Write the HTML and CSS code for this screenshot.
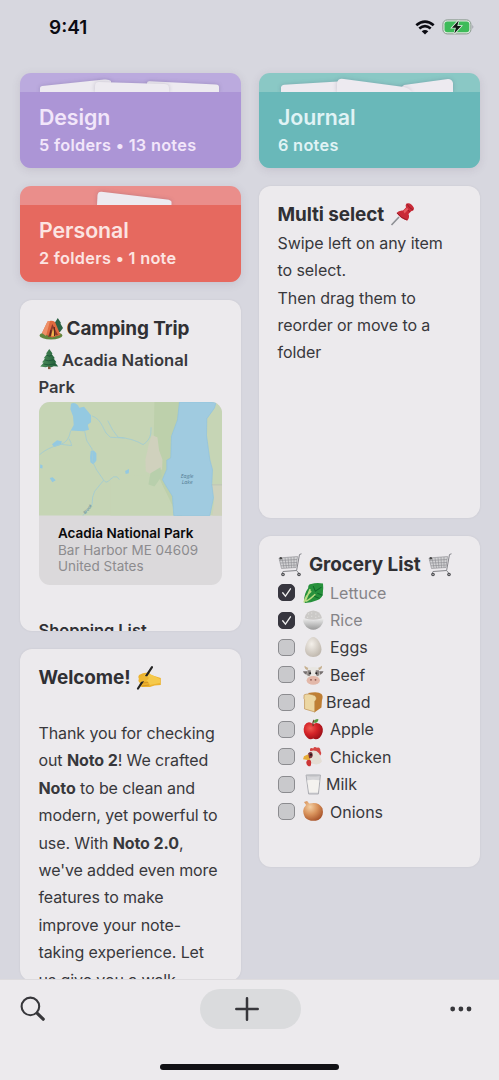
FILE: index.html
```
<!DOCTYPE html>
<html lang="en">
<head>
<meta charset="utf-8">
<title>Noto</title>
<link rel="stylesheet" href="styles.css">
</head>
<body>
<svg class="defs" width="0" height="0">
  <defs>
    <linearGradient id="silver" x1="0" y1="0" x2="0" y2="1"><stop offset="0" stop-color="#eee"/><stop offset="1" stop-color="#999"/></linearGradient>
    <radialGradient id="eggfill" cx=".4" cy=".35" r=".7"><stop offset="0" stop-color="#f4f0ea"/><stop offset="1" stop-color="#bfb7ad"/></radialGradient>
    <radialGradient id="applefill" cx=".35" cy=".35" r=".7"><stop offset="0" stop-color="#ef5a50"/><stop offset=".5" stop-color="#d42328"/><stop offset="1" stop-color="#9c1018"/></radialGradient>
    <radialGradient id="onionfill" cx=".35" cy=".3" r=".75"><stop offset="0" stop-color="#f3cfa4"/><stop offset=".5" stop-color="#d9935c"/><stop offset="1" stop-color="#a8542b"/></radialGradient>
    <linearGradient id="treefill" x1="0" x2="1"><stop offset="0" stop-color="#4f8f5c"/><stop offset="1" stop-color="#1e5a36"/></linearGradient>
    <symbol id="cart" viewBox="0 0 24 24">
      <path d="M1 5L19.500 3.500L18 14.500L3.500 15.500Z" fill="#d2d2d4"/>
      <path d="M1 5L19.500 3.500L18 14.500L3.500 15.500ZM4 5L6 15M7 5L8.500 15M10 4.500L11 15M13 4L13.500 15M16 4L16 14.500M1.500 7.500L19 6.500M2 10L19 9.500M3 12.800L18.500 12" fill="none" stroke="#8a8a8e" stroke-width=".6"/>
      <path d="M23.500.8L21.500 1.500L18.600 17.500L5 18.500L4 21M18.500 17.500L21.500 21" fill="none" stroke="#85858a" stroke-width="1"/>
      <circle cx="5" cy="21.500" r="1.800" fill="#4c4c50"/><circle cx="21" cy="21.500" r="1.800" fill="#4c4c50"/><circle cx="5" cy="21.500" r=".7" fill="#ccc"/><circle cx="21" cy="21.500" r=".7" fill="#ccc"/><circle cx="2.800" cy="5.200" r="1.200" fill="#444"/>
    </symbol>
    <symbol id="tree" viewBox="0 0 20 20">
      <path d="M8.800 16H11.300V19.800H8.800Z" fill="#80553a"/>
      <path d="M10 0L13.200 4.500L12.400 4.800L15.500 9L14.300 9.300L17 13L15.800 13.300L18.800 17L14.500 16.800L12 17.800L9.500 17L6.500 17.800L1.200 17L4.500 13.300L3 13L6 9.300L4.600 9L7.700 4.800L6.900 4.500Z" fill="url(#treefill)"/>
      <path d="M7.500 6L10 7L12.500 6M5.500 10.500L9 11.500L14.500 10.500M4.500 14.600L9 15.500L15.500 14.600" stroke="#174c31" stroke-width=".7" fill="none"/>
    </symbol>
  </defs>
</svg>
<div class="phone">
  <main class="screen">
    <header class="status">
      <span class="time">9:41</span>
      <span class="indicators">
        <svg width="20" height="15" viewBox="0 0 20 15"><g fill="none" stroke="#0b0b12" stroke-width="2.700"><path d="M1.300 5.200Q10-2 18.700 5.200"/><path d="M4.300 8.500Q10 3.800 15.700 8.500"/></g><path d="M6.700 11.300Q10 8.600 13.300 11.300L10 14.600Z" fill="#0b0b12"/></svg>
        <svg width="33" height="16" viewBox="0 0 33 16"><rect x=".9" y=".9" width="28" height="14" rx="4.300" fill="#e0eae1" stroke="#85978b" stroke-width="1"/><rect x="2.500" y="2.500" width="24.800" height="10.800" rx="2.800" fill="#3dbb59"/><path d="M30.500 5.700Q32.200 7.900 30.500 10Z" fill="#8b8d96"/><path d="M16.700 1.400L10 8.700H13.900L12.300 14.600L19.200 7H15.300Z" fill="#111713" stroke="#dfece1" stroke-width="1.600" paint-order="stroke"/></svg>
      </span>
    </header>
    <div class="board">
      <div class="column">
        <section class="folder purple">
          <svg class="papers" viewBox="0 0 221 19"><path d="M20 19V15Q20 13.500 22 13L84 6.500Q89 6 91 8V19Z"/><path d="M127 19V10Q127 7.800 130 8.200L196 11.500Q199 11.700 199 14V19Z"/><path d="M75 19V13Q75 9 79 9L144 11Q149 11 149 15V19Z"/></svg>
          <div class="label"><h2>Design</h2><p>5 folders • 13 notes</p></div>
        </section>
        <section class="folder red">
          <svg class="papers" viewBox="0 0 221 19"><path d="M77 19L77.500 9Q78 5.300 81.500 5.700L147 13.500Q151 14 151.500 16V19Z"/></svg>
          <div class="label"><h2>Personal</h2><p>2 folders • 1 note</p></div>
        </section>
        <section class="note camping">
          <h1><svg class="e24" viewBox="0 0 24 24"><ellipse cx="12" cy="18.500" rx="11.500" ry="4" fill="#62863d"/><path d="M18.800 1L22 6L21.400 6.500L24 11L21 15H16L15 7Z" fill="#2c6245"/><path d="M3 16L8.500 4.500Q13 3 16 5L21.500 18L13 20.500Z" fill="#df6a3f"/><path d="M8.500 4.500L3 16L7 19L11 4Z" fill="#ee9068"/><path d="M13.300 7L9 20L19 18Z" fill="#8f382b"/><path d="M14 11L12 19.500L16.500 18.700Z" fill="#f2b64b"/><path d="M15.300 10L15.500 19M12 13L11 19" stroke="#52251e" stroke-width="1"/></svg><span class="t-camp">Camping Trip</span></h1>
          <h3><svg class="e20 treepos"><use href="#tree"/></svg><span>Acadia National</span><br><span>Park</span></h3>
          <div class="place">
            <svg class="map" viewBox="86 22 550 341" preserveAspectRatio="none">
              <rect x="86" y="22" width="550" height="341" fill="#c6d5b5"/>
              <path d="M432 22H515V363H500L470 300L450 260L420 278L412 255L455 215L430 120Z" fill="#bdd0ab"/>
              <path d="M445 245L490 363H380L300 363V240Z" fill="#c6d5b5"/>
              <path d="M424 122L441 128L446 168L456 195L455 225L432 230L422 240L406 230L405 195L415 150Z" fill="#d0d1bd"/>
              <path d="M420 236L450 218L454 245L432 276L414 270Z" fill="#b8cfac"/>
              <path d="M604 270H636V363H606L611 320Z" fill="#cfd2bd"/>
              <path d="M507 22H617L612 40L589 72L588 122L598 195L606 225L604 270L609 310L598 363H490L486 305L466 273L456 255L469 224L469 197L481 190L483 125L501 76Z" fill="#a0cbe0" stroke="#8fc3df" stroke-width="2"/>
              <path d="M182 27Q192 21 202 31L207 39L221 36L242 62V83L232 90L236 105L219 110L181 108L190 91L188 65L180 44Z" fill="#94c9e1"/>
              <path d="M241 169L250 168L258 176V198L249 210L240 203L239 187ZM125 149L140 137L155 141L150 151L131 157ZM118 250L127 248L136 257L126 263ZM344 229L356 223L355 236L346 238ZM90 209L97 213L96 222L89 220Z" fill="#94c9e1"/>
              <path d="M88 180Q110 160 151 149Q175 143 181 108M151 149L184 153Q182 144 176 132M223 110L229 138L245 163L247 202L258 225L280 257Q288 269 299 255Q310 243 320 247L327 255M280 257L253 290L247 307L245 330L218 363M245 64Q265 70 277 96Q285 118 300 128L342 130M292 78Q306 109 323 128Q367 131 398 150Q417 138 421 118L422 98" fill="none" stroke="#a1cbd4" stroke-width="2.500"/>
              <path d="M604 271H636" stroke="#adb9b0" stroke-width="1.500"/>
              <g class="maptext"><text x="530" y="249">Eagle</text><text x="530" y="268">Lake</text><text class="brook" transform="translate(235 347) rotate(-52)">Brook</text></g>
            </svg>
            <div class="address"><b>Acadia National Park</b><span>Bar Harbor ME 04609</span><span>United States</span></div>
          </div>
          <h2 class="cut">Shopping List</h2>
        </section>
        <section class="note">
          <h1><span>Welcome!</span><svg class="e24 after" viewBox="0 0 24 24"><path d="M2 9Q6 6 12 6.500L14 9L23.800 12V19Q17 19 13 21L5 21Q1.500 20 3 17Q.5 15 2 13Q.5 11 2 9Z" fill="#edb32e"/><path d="M9 8L14 8.500L23 13V17L13 19Q11 14 7 14L4 12Z" fill="#f5c94b"/><path d="M4 17L11 16.500M5 20L12 19" fill="none" stroke="#c98a22" stroke-width=".7"/><path d="M1 22.500L15 1.200" stroke="#242424" stroke-width="2.200" stroke-linecap="round"/><path d="M2.500 11Q8 9 11.500 11Q12.500 13.500 8 15L3 16Q1 13 2.500 11Z" fill="#efb832"/></svg></h1>
          <div class="body welcome">Thank you for checking<br>out <b>Noto 2</b>! We crafted<br><b>Noto</b> to be clean and<br>modern, yet powerful to<br>use. With <b>Noto 2.0</b>,<br>we've added even more<br>features to make<br>improve your note-<br>taking experience. Let<br>us give you a walk</div>
        </section>
      </div>
      <div class="column">
        <section class="folder teal">
          <svg class="papers" viewBox="0 0 221 19"><path d="M22 19V14Q22.500 12 25 11.800L79 8.500V19Z"/><path d="M137 19L145 12L189 6Q193 6 194 10V19Z"/><path d="M78 19V10Q79 4.500 85 6L145 14Q150 15 153 19Z"/></svg>
          <div class="label"><h2>Journal</h2><p>6 notes</p></div>
        </section>
        <section class="note">
          <h1><span>Multi select</span><svg class="e24 after pin" viewBox="0 0 24 24"><path d="M.5 23L8 15" stroke="#8d8f94" stroke-width="1.600"/><path d="M15.500 1.500Q20 0 23 6Q23 9 20.500 9L17.500 12Q19 15 16.500 18.500Q11 18 5.500 11Q8 8 12 8.500L15 5.500Q14 3 15.500 1.500Z" fill="#c92b38"/><path d="M16 2Q18 6 22 8M15 6Q17 9 19 9.700M6 11Q10 16 16 18" fill="none" stroke="#991c29" stroke-width="1"/><path d="M12.500 9L16 5.500L17.300 7.500L13.500 11.500Z" fill="#e75a5f"/></svg></h1>
          <div class="body">Swipe left on any item<br>to select.<br>Then drag them to<br>reorder or move to a<br>folder</div>
        </section>
        <section class="note">
          <h1><svg class="e24"><use href="#cart"/></svg><span class="t-grocery">Grocery List</span><svg class="e24 after"><use href="#cart"/></svg></h1>
          <ul class="list">
            <li class="done"><i><svg viewBox="0 0 17 17"><path d="M4.200 8.800L7.300 12.600L13 4.300"/></svg></i><svg class="e20" viewBox="0 0 20 20"><path d="M1 18Q1 10 5 5Q5 1 8 1Q13-.5 19.500.5Q20 5 19.500 8Q20 15 13 17Q8 19 2 19.500Z" fill="#27913c"/><path d="M1 19Q3 12 8 8M2 18Q5 11 7 6M3 18Q8 15 12 11" stroke="#b9db82" stroke-width="1.500" fill="none"/><path d="M10 3L12 8L18 4M14 10L19 12M11 13L16 15" stroke="#0f6c2a" stroke-width="1" fill="none"/></svg><span>Lettuce</span></li>
            <li class="done"><i><svg viewBox="0 0 17 17"><path d="M4.200 8.800L7.300 12.600L13 4.300"/></svg></i><svg class="e20" viewBox="0 0 20 20"><path d="M1.500 8Q3 1 10 .6Q17 1 18.500 8Q10 11 1.500 8Z" fill="#cbc9c7"/><path d="M0 8Q0 15 5.500 18Q10 20.500 14.500 18Q20 15 20 8Q10 12 0 8Z" fill="url(#silver)"/><path d="M5 4H6M8 3H9M12 4H13M8 6H9M15 6H16M4 7H5M12 7H13" stroke="#e5e4e2"/></svg><span>Rice</span></li>
            <li><i></i><svg class="e20" viewBox="0 0 20 20"><path d="M10 0C14 0 18 7 18 12C18 17 14.500 19.500 10 19.500C5.500 19.500 2 17 2 12C2 7 6 0 10 0Z" fill="url(#eggfill)"/></svg><span>Eggs</span></li>
            <li><i></i><svg class="e20" viewBox="0 0 20 20"><path d="M4.500 5Q1 4 1.500.8Q4 3 7 3.500M15.500 5Q19 4 18.500.8Q16 3 13 3.500" fill="#c6b090"/><path d="M1 6L5 6L5 10Q1 9 0 6ZM20 6L15 6L15 10Q19 9 20 6Z" fill="#777171"/><path d="M5 3Q10 1 15 3L17 11L15 17Q10 21 5 17L3 11Z" fill="#e8e6e2"/><path d="M4.500 5H7.500Q8.500 9 6 11L4 10ZM15.500 5H12.500Q11.500 9 14 11L16 10Z" fill="#8a8381"/><ellipse cx="10" cy="15" rx="6.500" ry="4.300" fill="#e3b8a9"/><circle cx="7" cy="8" r="1" fill="#222"/><circle cx="13" cy="8" r="1" fill="#222"/><circle cx="7.800" cy="14.500" r=".9" fill="#915d55"/><circle cx="12.200" cy="14.500" r=".9" fill="#915d55"/></svg><span>Beef</span></li>
            <li class="tight"><i></i><svg class="e20" viewBox="0 0 20 20"><path d="M5 1Q15-1 18 2Q20 4 18.500 8L18 15L11 20L9 7Z" fill="#bf7f34"/><path d="M1 4Q0 2 6 2Q13 3 13 6Q13 8 11.500 9V19.500L1.500 16.500V7.500Q.5 6.500 1 4Z" fill="#ecd7a3" stroke="#b98645" stroke-width=".6"/></svg><span>Bread</span></li>
            <li><i></i><svg class="e20" viewBox="0 0 20 20"><path d="M10 5Q5 1 1.500 6Q-1 13 4 18Q7 21 10 19Q13 21 16.500 18Q21 12 18.500 7Q15 2 10 5Z" fill="url(#applefill)"/><path d="M10 7Q9 3 11 1" stroke="#684025" stroke-width="1.200" fill="none"/><path d="M11 4Q10 0 15 0Q15 4 11 4Z" fill="#54983d"/></svg><span>Apple</span></li>
            <li><i></i><svg class="e20" viewBox="0 0 20 20"><path d="M7 4Q6 0 10 1.500Q11-1 13.500.8Q17-.5 17 4Q19 7 16 9Z" fill="#d44543"/><path d="M6 5Q9 2.500 13 4Q16.500 6 17 10L18.500 14Q17 17 13 17Q8 17 6 14L5 10Z" fill="#e4ded5"/><path d="M5 7L1 9L0 12L6 13Q9 11 5 7Z" fill="#e6ac38"/><path d="M5 6Q9.500 3 9.500 8.500Q9 11.500 6 11Z" fill="#7a3038"/><path d="M4 13Q8 11 8 15Q8 20 5 18.500Q2 16 4 13Z" fill="#cc3535"/><circle cx="7.800" cy="7.500" r="1" fill="#201818"/></svg><span>Chicken</span></li>
            <li class="tight"><i></i><svg class="e20" viewBox="0 0 20 20"><path d="M3 1H17L15 19.500H5.500Z" fill="#d6d6d9" stroke="#a2a3a9" stroke-width=".8"/><path d="M4 6Q10 5 16 6L14.500 18H6Z" fill="#f4f2ef"/><ellipse cx="10" cy="1.500" rx="6.800" ry="1" fill="#bdbec2"/></svg><span>Milk</span></li>
            <li><i></i><svg class="e20" viewBox="0 0 20 20"><path d="M1 1L4 0L6 2.500Q15 0 19 7Q21 15 15 18.500Q7 21 2 16Q-2 9 3 4Z" fill="url(#onionfill)"/></svg><span>Onions</span></li>
          </ul>
        </section>
      </div>
    </div>
  </main>
  <footer class="toolbar">
    <div class="actions">
      <svg class="search" width="26" height="26" viewBox="0 0 26 26"><circle cx="10.400" cy="10.400" r="8.800" fill="none" stroke="#37373b" stroke-width="2.100"/><path d="M17.300 17.300L23.200 23.200" stroke="#37373b" stroke-width="3.200" stroke-linecap="round"/></svg>
      <div class="add"><svg width="24" height="24" viewBox="0 0 24 24"><path d="M12 1.300V22.700M1.300 12H22.700" stroke="#37373b" stroke-width="2.500" stroke-linecap="round"/></svg></div>
      <svg class="more" width="22" height="6" viewBox="0 0 22 6"><g fill="#37373b"><circle cx="2.700" cy="3" r="2.400"/><circle cx="10.900" cy="3" r="2.400"/><circle cx="19" cy="3" r="2.400"/></g></svg>
    </div>
    <div class="home"></div>
  </footer>
</div>
</body>
</html>
```

FILE: styles.css
```
* { box-sizing: border-box; }
body { margin: 0; font-family: Inter, "Liberation Sans", sans-serif; color: #38383c; }
h1, h2, h3, p, ul { margin: 0; padding: 0; }
.defs { display: block; }
.phone { width: 499px; height: 1080px; display: flex; flex-direction: column; overflow: hidden; background: #d7d7df; }
.screen { height: 979px; overflow: hidden; flex: none; }
.status { height: 72.600px; padding: 15px 24px 0 49px; display: flex; justify-content: space-between; align-items: flex-start; }
.time { font-size: 19px; line-height: 25px; font-weight: 600; color: #0b0b12; }
.indicators { display: flex; gap: 7px; align-items: center; height: 24px; }
.board { display: flex; gap: 18px; padding-left: 20px; }
.column { width: 221px; display: flex; flex-direction: column; gap: 18px; }
.folder { height: 95.500px; border-radius: 11px; overflow: hidden; flex: none; display: flex; flex-direction: column; box-shadow: 0 2px 8px rgba(100, 80, 110, .15); }
.papers { width: 221px; height: 19px; display: block; flex: none; fill: #edeaf0; }
.papers path { filter: drop-shadow(0 0 2px rgba(50, 40, 80, .22)); }
.purple { background: #bbaade; }
.purple .label { background: #ac95d6; color: #f2e6fa; }
.red { background: #ea8e8b; }
.red .label { background: #e6695f; color: #fce4e2; }
.teal { background: #8ac8c5; }
.teal .label { background: #69b8b9; color: #e0f3f5; }
.label { flex: 1; padding: 11px 19px 0; }
.label h2 { font-size: 21.300px; line-height: 28px; font-weight: 620; letter-spacing: -.05px; }
.label p { font-size: 16.300px; line-height: 28px; font-weight: 620; letter-spacing: .3px; white-space: nowrap; }
.note { height: 331.500px; border-radius: 12px; background: #eceaed; overflow: hidden; padding: 14px 18.500px 0; flex: none; box-shadow: 0 0 2px rgba(90, 80, 90, .12); }
.note h1 { font-size: 18.900px; line-height: 30px; height: 30px; font-weight: 650; letter-spacing: -.08px; color: #303034; display: flex; align-items: center; white-space: nowrap; }
.e24 { width: 24px; height: 24px; flex: none; overflow: visible; }
.e20 { width: 20.500px; height: 20.500px; flex: none; overflow: visible; }
.t-camp { margin-left: 4px; }
.after { margin-left: 7px; }
.pin { margin-bottom: 3px; }
.note h3 { font-size: 16.600px; line-height: 27.350px; margin-top: 3px; font-weight: 570; white-space: nowrap; }
.treepos { vertical-align: -4px; margin-right: 3px; }
.place { margin-top: 1px; width: 183.500px; height: 182.500px; border-radius: 11px; overflow: hidden; background: #dbd9db; }
.map { width: 183.500px; height: 113.500px; display: block; }
.maptext { font: italic 16px "Open Sans", sans-serif; fill: #527a92; text-anchor: middle; }
.brook { font-size: 13px; }
.address { padding: 9px 0 0 19.500px; font-size: 13.500px; line-height: 16px; color: #8c8b8e; display: flex; flex-direction: column; white-space: nowrap; }
.address b { font-weight: 600; color: #0a0a0b; line-height: 17px; }
.cut { margin-top: 32.500px; font-size: 16.400px; line-height: 27px; font-weight: 600; white-space: nowrap; color: #303034; }
.body { font-size: 16px; line-height: 27.350px; white-space: nowrap; letter-spacing: -.07px; }
.body b { font-weight: 650; }
.welcome { margin-top: 26.800px; line-height: 27.400px; letter-spacing: -.1px; }
.t-grocery { margin-left: 7.500px; }
.list { list-style: none; font-size: 16px; margin-top: -.5px; }
.list li { height: 27.350px; display: flex; align-items: center; white-space: nowrap; }
.list i { width: 17px; height: 17px; border: 1px solid #8b8b8f; border-radius: 5px; background: #c9c9cc; margin-right: 8.500px; flex: none; }
.list .done { color: #858488; }
.list .done i { background: #37363f; border-color: #37363f; }
.list i svg { display: block; width: 15px; height: 15px; fill: none; stroke: #eee; stroke-width: 1.500; stroke-linecap: round; }
.list span { margin-left: 6.500px; }
.list .tight span { margin-left: 2.500px; }
.toolbar { height: 101px; flex: none; background: #eceaed; border-top: 1px solid #dddbde; display: flex; flex-direction: column; align-items: center; }
.actions { width: 100%; height: 58px; padding: 0 27.500px 0 20px; display: grid; grid-template-columns: 179.500px 101px 1fr; align-items: center; }
.add { width: 101px; height: 40px; border-radius: 20px; background: #dadbdd; display: flex; align-items: center; justify-content: center; padding-right: 6px; }
.more { justify-self: end; }
.home { width: 179px; height: 6px; border-radius: 3px; background: #111115; margin-top: 26px; }
```
